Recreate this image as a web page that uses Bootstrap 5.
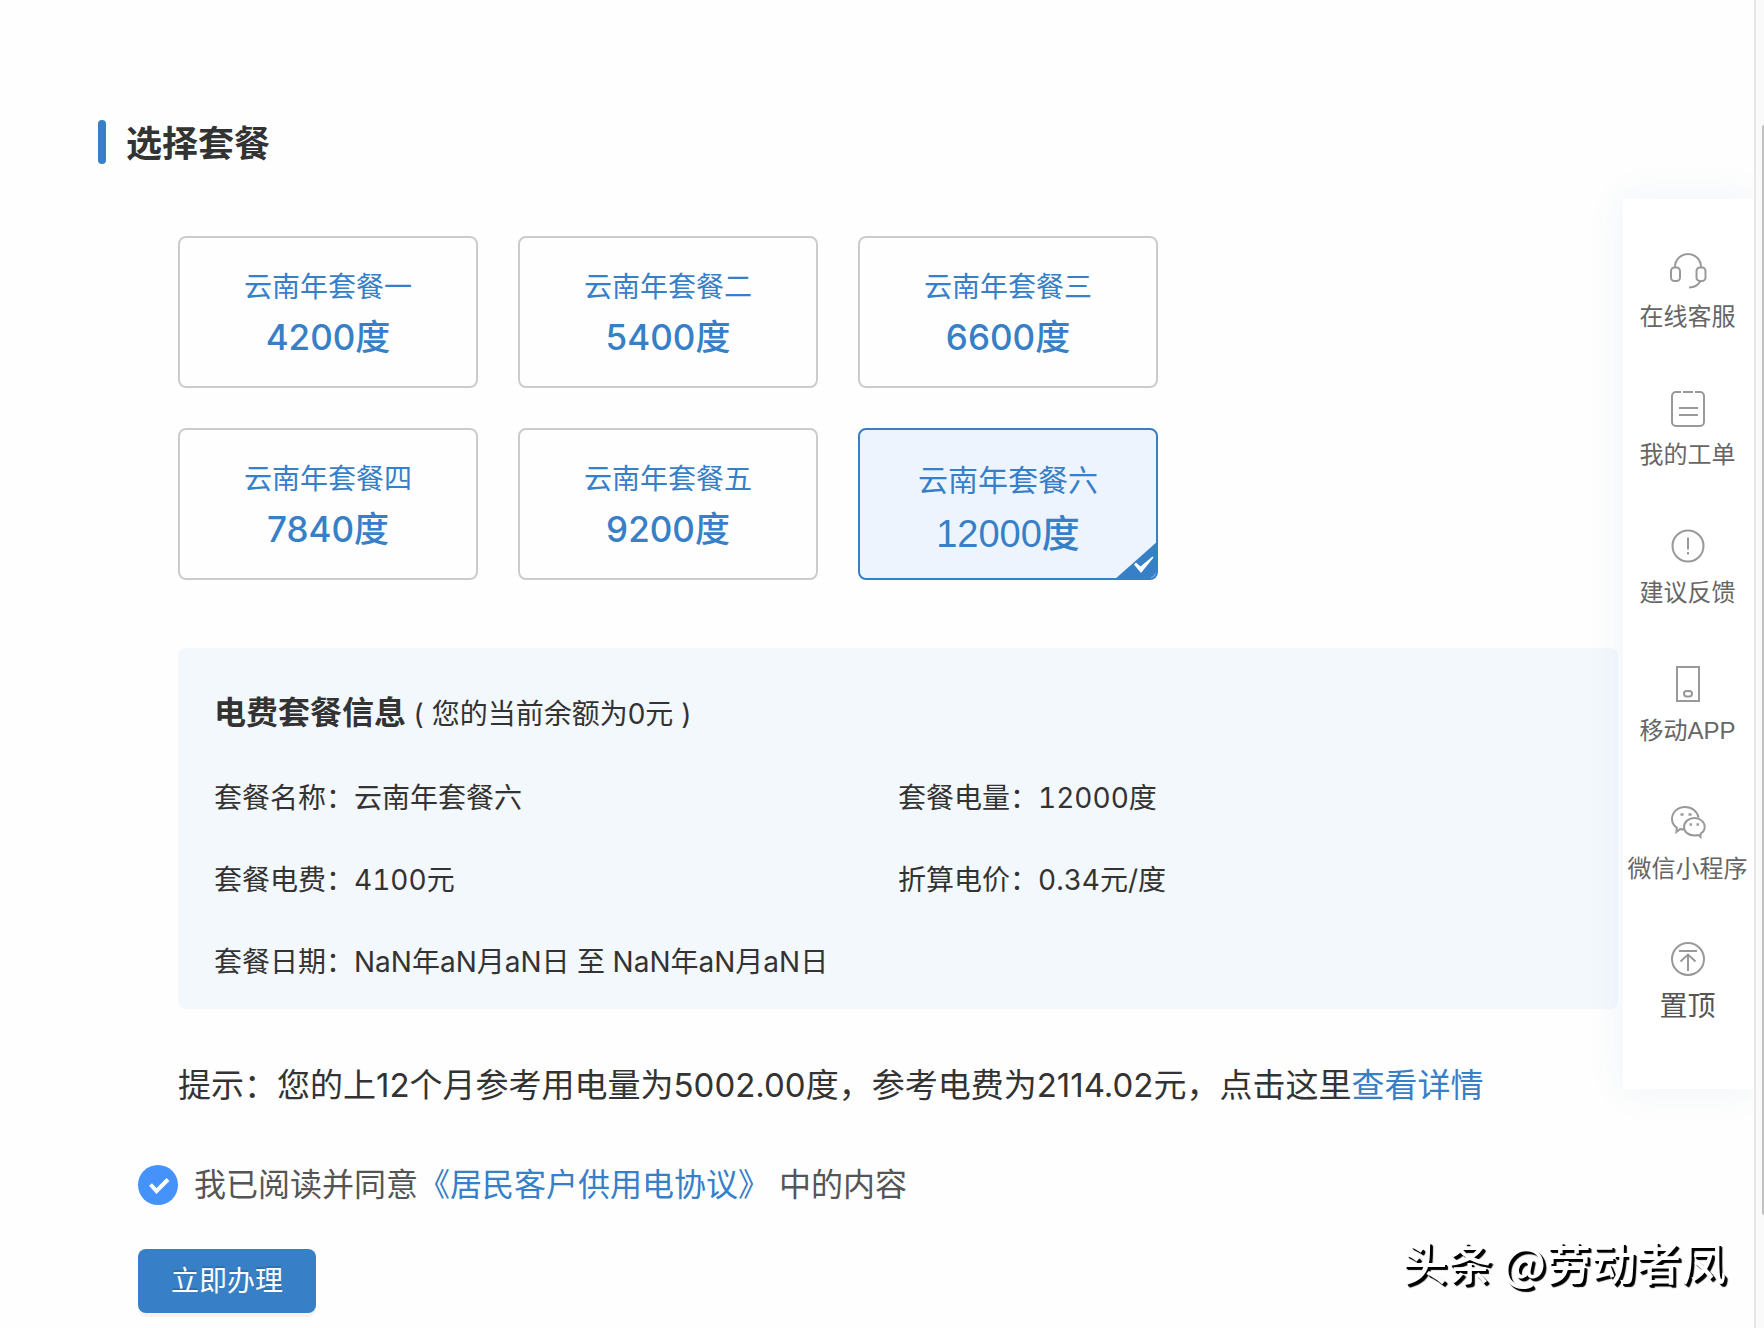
<!DOCTYPE html>
<html lang="zh-CN">
<head>
<meta charset="utf-8">
<meta name="viewport" content="width=device-width, initial-scale=1">
<title>选择套餐</title>
<link href="https://cdn.jsdelivr.net/npm/bootstrap@5.3.0/dist/css/bootstrap.min.css" rel="stylesheet">
<style>
:root { --brand: #377fc7; --ink: #333; }
body { font-family: Inter, "Noto Sans CJK SC", sans-serif; color: var(--ink); background: #fefefe; font-size: 28px; line-height: 40px; overflow: hidden; }
a { color: var(--brand); text-decoration: none; }
.page-main { padding: 120px 5px 0 98px; min-width: 0; }
.section-title { font-size: 36px; line-height: 40px; font-weight: 700; gap: 20px; margin-bottom: 72px; }
.section-title::before { content: ""; width: 8px; height: 44px; border-radius: 4px; background: var(--brand); }
.section-title span { padding-top: 4px; }
.section-body { margin-left: 80px; }
.plan-grid { display: grid; grid-template-columns: repeat(3, 300px); gap: 40px; margin-bottom: 68px; }
.plan { height: 152px; border: 2px solid #ccc; border-radius: 8px; color: var(--brand); cursor: pointer; padding-top: 2px; }
.plan-name { font-size: 28px; line-height: 48px; }
.plan-kwh { font-size: 35px; line-height: 52px; font-weight: 500; }
.plan-tick { display: none; right: -2px; bottom: -2px; }
.btn-check:checked + .plan { border-color: var(--brand); background: #eef4fe; padding-top: 11px; font-family: "Liberation Sans", "Noto Sans CJK SC", sans-serif; }
.btn-check:checked + .plan .plan-name { font-size: 30px; }
.btn-check:checked + .plan .plan-kwh { font-size: 38px; line-height: 58px; }
.btn-check:checked + .plan .plan-tick { display: block; }
.info-panel { background: #f3f8fc; border-radius: 8px; padding: 41px 36px 6px; margin-bottom: 52px; }
.info-title { font-size: 32px; line-height: 48px; font-weight: 700; }
.info-list { margin: 0; padding-top: 19px; font-variant-numeric: tabular-nums; }
.info-item { line-height: 40px; padding: 21px 0; }
.hint { font-size: 33px; line-height: 48px; margin-bottom: 52px; }
.form-block { margin-left: 40px; }
.agree { font-size: 32px; line-height: 48px; color: #555; gap: 16px; margin-bottom: 40px; }
.agree .form-check-input { width: 40px; height: 40px; margin: 0; border: 0; border-radius: 50%; }
.agree .form-check-input:checked { background-color: #4592fb; background-size: 40px 40px; background-image: url("data:image/svg+xml,%3Csvg xmlns='http://www.w3.org/2000/svg' viewBox='0 0 40 40'%3E%3Cpath d='M12.5 19.5l6 6.5 11.500-11.500' fill='none' stroke='%23fff' stroke-width='4'/%3E%3C/svg%3E"); }
.btn-submit { --bs-btn-bg: var(--brand); --bs-btn-color: #fff; --bs-btn-hover-bg: #2f70b0; --bs-btn-hover-color: #fff; font-size: 28px; line-height: 40px; padding: 12px 33px; border: 0; border-radius: 8px; box-shadow: 0 4px 0 rgba(0,0,0,.045); text-shadow: 0 -2px 0 rgba(0,0,0,.12); }
.side-tools { width: 131px; height: 890px; margin-top: 199px; padding: 51px 2px 0 0; background: #fff; box-shadow: 0 0 36px rgba(60,100,150,.08); z-index: 2; }
.side-link { color: #666; font: 24px/36px "Liberation Sans", "Noto Sans CJK SC", sans-serif; margin-bottom: 53px; white-space: nowrap; }
.side-link svg { width: 40px; height: 44px; margin-bottom: 5px; fill: none; stroke: #999; stroke-width: 2; }
.side-link.to-top { font-size: 28px; color: #555; }
.scroll-track { width: 10px; border-left: 2px solid #e7e7e7; background: #fafafa; z-index: 3; padding: 125px 0 0 6px; }
.scroll-thumb { height: 1090px; background: #c1c1c1; border-radius: 4px 0 0 4px; }
.watermark { position: fixed; right: 38px; bottom: 34px; font: 500 45px/64px "Noto Sans CJK SC", sans-serif; color: #fff; text-shadow: 2px 2px 0 #000, 3px 3px 1px #000; z-index: 4; }
</style>
<script src="https://cdn.jsdelivr.net/npm/bootstrap@5.3.0/dist/js/bootstrap.bundle.min.js" defer></script>
</head>
<body>
<div class="d-flex min-vh-100">
  <main class="page-main flex-grow-1">
    <h1 class="section-title d-flex align-items-center"><span>选择套餐</span></h1>
    <form>
      <div class="section-body">
        <div class="plan-grid">
          <div><input class="btn-check" type="radio" name="plan" id="plan1"><label class="plan w-100 d-flex flex-column justify-content-center align-items-center" for="plan1"><span class="plan-name">云南年套餐一</span><span class="plan-kwh">4200度</span></label></div>
          <div><input class="btn-check" type="radio" name="plan" id="plan2"><label class="plan w-100 d-flex flex-column justify-content-center align-items-center" for="plan2"><span class="plan-name">云南年套餐二</span><span class="plan-kwh">5400度</span></label></div>
          <div><input class="btn-check" type="radio" name="plan" id="plan3"><label class="plan w-100 d-flex flex-column justify-content-center align-items-center" for="plan3"><span class="plan-name">云南年套餐三</span><span class="plan-kwh">6600度</span></label></div>
          <div><input class="btn-check" type="radio" name="plan" id="plan4"><label class="plan w-100 d-flex flex-column justify-content-center align-items-center" for="plan4"><span class="plan-name">云南年套餐四</span><span class="plan-kwh">7840度</span></label></div>
          <div><input class="btn-check" type="radio" name="plan" id="plan5"><label class="plan w-100 d-flex flex-column justify-content-center align-items-center" for="plan5"><span class="plan-name">云南年套餐五</span><span class="plan-kwh">9200度</span></label></div>
          <div><input class="btn-check" type="radio" name="plan" id="plan6" checked><label class="plan w-100 d-flex flex-column justify-content-center align-items-center position-relative overflow-hidden" for="plan6"><span class="plan-name">云南年套餐六</span><span class="plan-kwh">12000度</span>
            <svg class="plan-tick position-absolute" width="44" height="39" viewBox="0 0 44 39" aria-hidden="true"><path d="M0 39L44 0v39z" fill="#377fc7"/><path d="M20 23.500l2-2 4.500 4L38.500 15.500l1 1L27 32z" fill="#fff"/><path d="M41 33q-1 3-4 4" fill="none" stroke="#8db9e6"/></svg></label></div>
        </div>

        <section class="info-panel">
          <h2 class="info-title m-0">电费套餐信息 <small class="fw-normal">( 您的当前余额为0元 )</small></h2>
          <div class="info-list row g-0">
            <div class="col-6 info-item">套餐名称：云南年套餐六</div>
            <div class="col-6 info-item">套餐电量：12000度</div>
            <div class="col-6 info-item">套餐电费：4100元</div>
            <div class="col-6 info-item">折算电价：0.34元/度</div>
            <div class="col-12 info-item">套餐日期：NaN年aN月aN日 至 NaN年aN月aN日</div>
          </div>
        </section>

        <p class="hint">提示：您的上12个月参考用电量为5002.00度，参考电费为2114.02元，点击这里<a href="#detail">查看详情</a></p>
      </div>

      <div class="form-block">
        <div class="agree d-flex align-items-center">
          <input class="form-check-input flex-shrink-0" type="checkbox" id="agree" checked>
          <label for="agree">我已阅读并同意<a href="#agreement">《居民客户供用电协议》</a> 中的内容</label>
        </div>
        <button class="btn btn-submit" type="button">立即办理</button>
      </div>
    </form>
  </main>

  <aside class="side-tools flex-shrink-0 position-relative d-flex flex-column">
    <a class="side-link d-flex flex-column align-items-center" href="#service">
      <svg viewBox="0 0 40 44"><path d="M7 17.500V17a13 13 0 0 1 26 0v.5"/><rect x="3" y="17.500" width="9" height="13.500" rx="3.500"/><rect x="28.500" y="17.500" width="9" height="13.500" rx="3.500"/><path d="M32.500 31q-3 6-11.500 6.500"/></svg>
      在线客服</a>
    <a class="side-link d-flex flex-column align-items-center" href="#orders">
      <svg viewBox="0 0 40 44"><path d="M13 4H8a4 4 0 0 0-4 4v26a4 4 0 0 0 4 4h24a4 4 0 0 0 4-4V8a4 4 0 0 0-4-4h-5M15 4h10M11 20h19M11 27h19"/></svg>
      我的工单</a>
    <a class="side-link d-flex flex-column align-items-center" href="#feedback">
      <svg viewBox="0 0 40 44"><circle cx="20" cy="20" r="15.500"/><path d="M20 11.500v12M20 26v2.500"/></svg>
      建议反馈</a>
    <a class="side-link d-flex flex-column align-items-center" href="#app">
      <svg viewBox="0 0 40 44"><path d="M9 3h22v34H9z"/><rect x="16" y="27" width="8" height="5.500" rx="2.700"/></svg>
      移动APP</a>
    <a class="side-link d-flex flex-column align-items-center" href="#wechat">
      <svg viewBox="0 2 40 44"><path d="M16 29.500q-2 0-4-.5L8.500 32l.3-4.500C5.500 25.500 4 22.500 4 19 4 12 10 7 17 7c7 0 12.500 4.500 13.500 10.500"/><path d="M26.500 18C20.500 18 16 22 16 27s4.500 8.500 10.500 8.500q2 0 4-.5l2 2 .2-3.500c2.500-1.500 4-3.500 4-6.500 0-5-4.500-9-10.200-9z"/><path d="M12.500 14.500h3M20.500 14.500h3M21.500 24.500h2.500M28.500 24.500H31" stroke-width="2.500"/></svg>
      微信小程序</a>
    <a class="side-link to-top d-flex flex-column align-items-center" href="#top">
      <svg viewBox="0 0 40 44"><circle cx="20" cy="19" r="16"/><path d="M11 11h18M20 31V14.500M12.500 21.500l7.500-7 7.500 7"/></svg>
      置顶</a>
  </aside>
  <div class="scroll-track flex-shrink-0"><div class="scroll-thumb"></div></div>
</div>
<div class="watermark">头条 @劳动者凤</div>
</body>
</html>
